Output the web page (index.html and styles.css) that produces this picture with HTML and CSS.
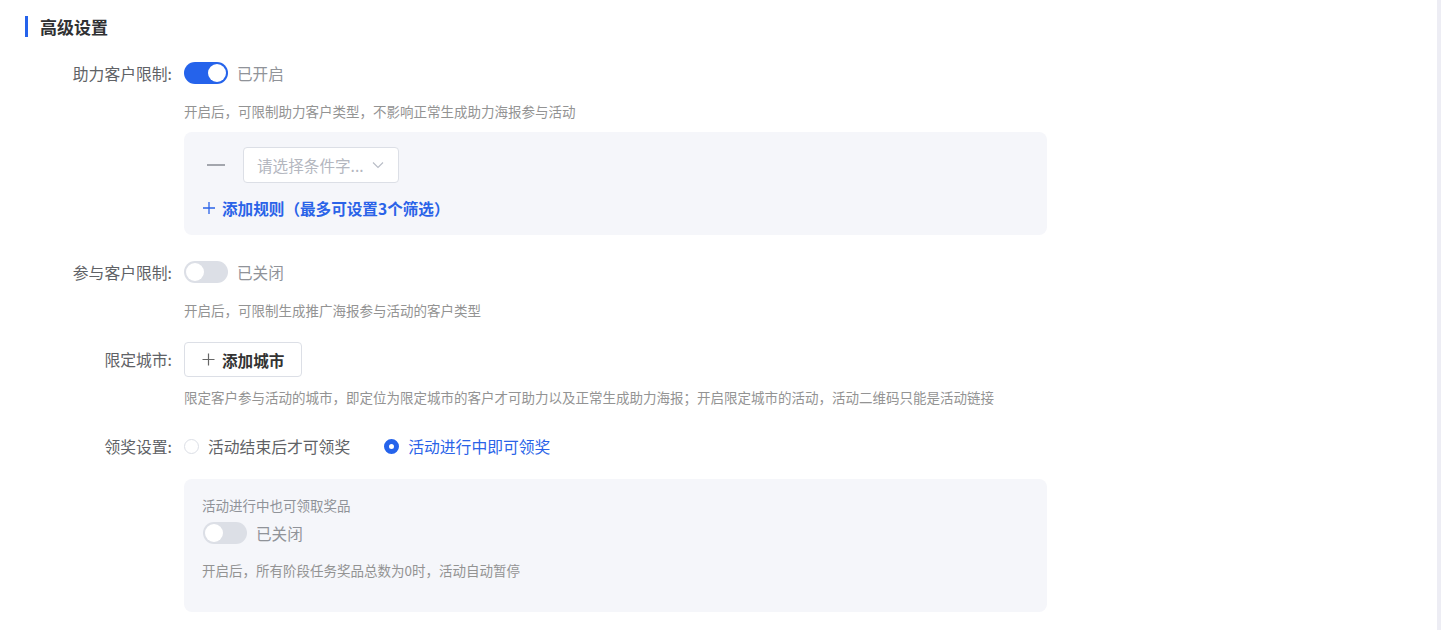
FILE: index.html
```html
<!DOCTYPE html>
<html lang="zh-CN">
<head>
    <meta charset="UTF-8">
    <meta name="viewport" content="width=device-width, initial-scale=1.0">
    <title>高级设置</title>
    <link rel="stylesheet" href="styles.css">
</head>
<body>
    <div class="page">
        <div class="section-title">高级设置</div>

        <!-- 助力客户限制 -->
        <div class="form-row row-help">
            <div class="form-label">助力客户限制:</div>
            <div class="form-field">
                <span class="switch on"><span class="knob"></span></span>
                <span class="switch-text">已开启</span>
            </div>
        </div>
        <div class="help help-1">开启后，可限制助力客户类型，不影响正常生成助力海报参与活动</div>

        <div class="panel rule-panel">
            <div class="rule-line">
                <span class="rule-remove"></span>
                <div class="select">
                    <span class="placeholder">请选择条件字...</span>
                    <svg class="chevron" width="12" height="8" viewBox="0 0 12 8"><path d="M1 1.5 6 6.5 11 1.5" fill="none" stroke="#b8bcc6" stroke-width="1.1"/></svg>
                </div>
            </div>
            <div class="add-rule">
                <svg width="14" height="14" viewBox="0 0 14 14"><path d="M7 1v12M1 7h12" stroke="#2a63e8" stroke-width="1.3"/></svg>
                <span>添加规则（最多可设置3个筛选）</span>
            </div>
        </div>

        <!-- 参与客户限制 -->
        <div class="form-row row-join">
            <div class="form-label">参与客户限制:</div>
            <div class="form-field">
                <span class="switch"><span class="knob"></span></span>
                <span class="switch-text">已关闭</span>
            </div>
        </div>
        <div class="help help-2">开启后，可限制生成推广海报参与活动的客户类型</div>

        <!-- 限定城市 -->
        <div class="form-row row-city">
            <div class="form-label">限定城市:</div>
            <div class="form-field">
                <button class="btn-add">
                    <svg width="13" height="13" viewBox="0 0 13 13"><path d="M6.5 0.5v12M0.5 6.5h12" stroke="#666" stroke-width="1.2"/></svg>
                    <span>添加城市</span>
                </button>
            </div>
        </div>
        <div class="help help-3">限定客户参与活动的城市，即定位为限定城市的客户才可助力以及正常生成助力海报；开启限定城市的活动，活动二维码只能是活动链接</div>

        <!-- 领奖设置 -->
        <div class="form-row row-prize">
            <div class="form-label">领奖设置:</div>
            <div class="form-field">
                <label class="radio">
                    <span class="radio-dot"></span>
                    <span>活动结束后才可领奖</span>
                </label>
                <label class="radio checked">
                    <span class="radio-dot"></span>
                    <span>活动进行中即可领奖</span>
                </label>
            </div>
        </div>

        <div class="panel prize-panel">
            <div class="panel-title">活动进行中也可领取奖品</div>
            <div class="panel-switch">
                <span class="switch"><span class="knob"></span></span>
                <span class="switch-text">已关闭</span>
            </div>
            <div class="help">开启后，所有阶段任务奖品总数为0时，活动自动暂停</div>
        </div>
    </div>
</body>
</html>
```

FILE: styles.css
```css
body, html {
    margin: 0;
    padding: 0;
    font-family: "Noto Sans CJK SC", "Microsoft YaHei", sans-serif;
    background: #fff;
}

.page {
    height: 630px;
    box-sizing: border-box;
    border-right: 4px solid #ededf4;
    background: #fff;
    overflow: hidden;
}

.section-title {
    margin: 16px 0 0 25px;
    padding-left: 12px;
    border-left: 3px solid #2563eb;
    line-height: 21px;
    font-size: 17px;
    font-weight: bold;
    color: #303133;
}

.form-row {
    display: flex;
    align-items: center;
    height: 22px;
}

.form-label {
    width: 172px;
    text-align: right;
    font-size: 15.8px;
    color: #606266;
    margin-right: 12px;
}

.form-field {
    display: flex;
    align-items: center;
}

.row-help { margin-top: 25px; }
.row-join { margin-top: 26px; }
.row-city { margin-top: 22px; height: 35px; }
.row-prize { margin-top: 28px; }

/* switch */
.switch {
    position: relative;
    display: inline-block;
    width: 44px;
    height: 22px;
    border-radius: 11px;
    background: #dcdfe6;
}

.switch.on {
    background: #2563eb;
}

.switch .knob {
    position: absolute;
    top: 2px;
    left: 2px;
    width: 18px;
    height: 18px;
    border-radius: 50%;
    background: #fff;
}

.switch.on .knob {
    left: 24px;
}

.switch-text {
    margin-left: 9px;
    font-size: 15.6px;
    color: #909399;
}

.help {
    margin-left: 184px;
    font-size: 13.5px;
    line-height: 20px;
    color: #939393;
}

.help-1 { margin-top: 17px; }
.help-2 { margin-top: 17px; }
.help-3 { margin-top: 10px; }

/* grey panels */
.panel {
    width: 863px;
    margin-left: 184px;
    box-sizing: border-box;
    background: #f5f6fa;
    border-radius: 8px;
    padding-left: 18px;
}

.rule-panel {
    margin-top: 11px;
    padding-top: 15px;
    padding-bottom: 17px;
}

.rule-line {
    display: flex;
    align-items: center;
}

.rule-remove {
    display: inline-block;
    width: 18px;
    height: 2px;
    margin-left: 5px;
    background: #a3a6ad;
}

.select {
    display: flex;
    align-items: center;
    justify-content: space-between;
    width: 156px;
    height: 36px;
    box-sizing: border-box;
    margin-left: 18px;
    padding: 0 14px 0 13px;
    border: 1px solid #dcdfe6;
    border-radius: 4px;
    background: #fff;
}

.placeholder {
    font-size: 15.6px;
    color: #b4b7bf;
}

.add-rule {
    display: flex;
    align-items: center;
    margin-top: 15px;
    line-height: 20px;
    font-size: 15.6px;
    font-weight: bold;
    color: #2a63e8;
}

.add-rule svg {
    margin-right: 6px;
}

.btn-add {
    display: flex;
    align-items: center;
    height: 35px;
    box-sizing: border-box;
    padding: 0 17px;
    border: 1px solid #dcdfe6;
    border-radius: 4px;
    background: #fff;
    font-family: inherit;
    font-size: 15.6px;
    font-weight: bold;
    color: #333;
}

.btn-add svg {
    margin-right: 7px;
}

/* radios */
.radio {
    display: flex;
    align-items: center;
    font-size: 15.8px;
    color: #606266;
    margin-right: 34px;
}

.radio-dot {
    width: 15px;
    height: 15px;
    box-sizing: border-box;
    border: 1px solid #dcdfe6;
    border-radius: 50%;
    background: #fff;
    margin-right: 9px;
}

.radio.checked {
    color: #2a63e8;
}

.radio.checked .radio-dot {
    border: 5px solid #2563eb;
}

.prize-panel {
    margin-top: 22px;
    padding-top: 16px;
    padding-bottom: 32px;
}

.panel-title {
    font-size: 13.5px;
    line-height: 20px;
    color: #909399;
}

.panel-switch {
    display: flex;
    align-items: center;
    margin-top: 7px;
    margin-left: 1px;
}

.prize-panel .help {
    margin-left: 0;
    margin-top: 16px;
}
```
